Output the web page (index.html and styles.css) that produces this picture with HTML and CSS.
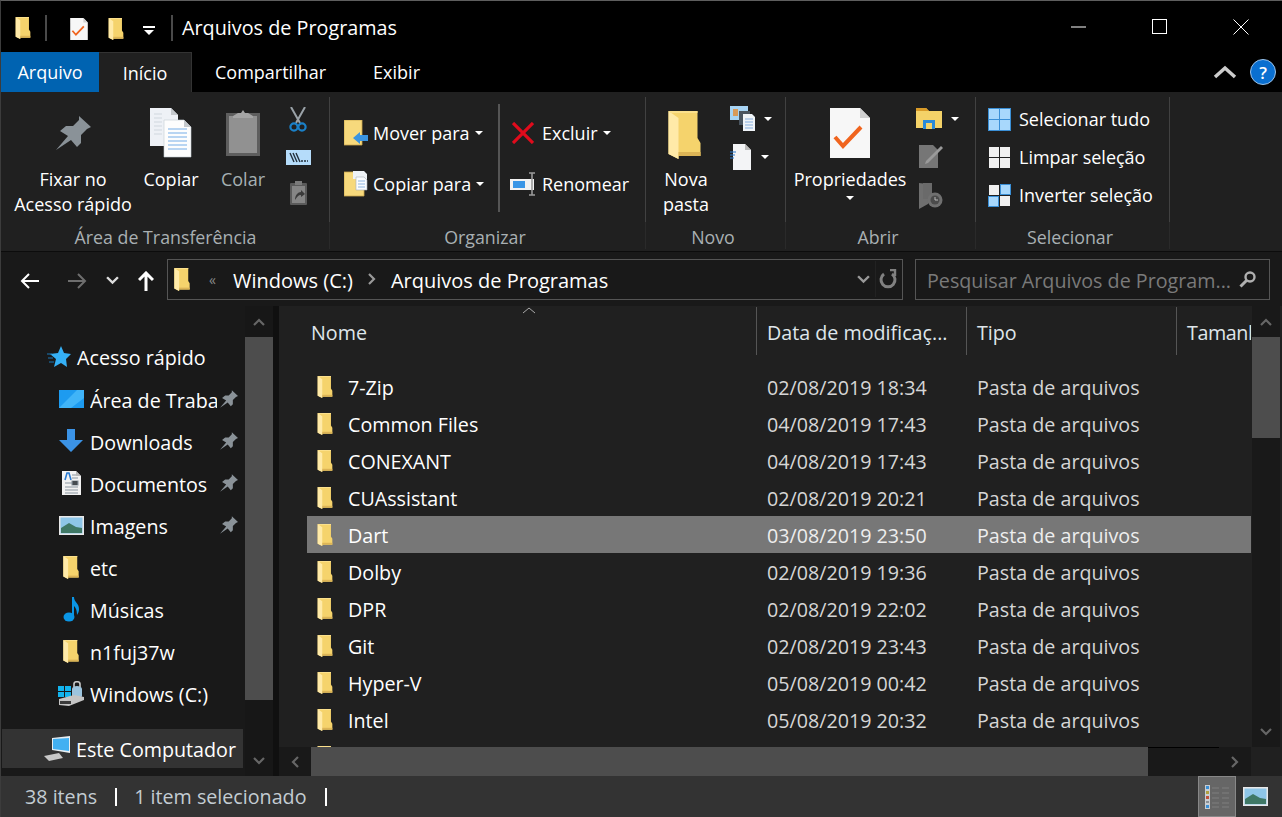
FILE: index.html
```html
<!DOCTYPE html>
<html lang="pt-BR">
<head>
<meta charset="utf-8">
<title>Arquivos de Programas</title>
<link rel="stylesheet" href="styles.css">
</head>
<body>
<svg class="defs" width="0" height="0" aria-hidden="true">
  <symbol id="folder" viewBox="0 0 32 48"><path d="M0 0H29V27L32 32V45H10V48L0 43Z" fill="#f5d36c"/><path d="M0 0L10 7V48L0 43Z" fill="#ffeaa8"/><path d="M10 41H32V45H10Z" fill="#dcb456"/><path d="M0 0H29V2H3Z" fill="#fbe08c"/></symbol>
  <symbol id="pin" viewBox="0 0 35 34"><path d="M0 34L12 20L4 15L10 10H17L23 4V0L35 11L31 13L25 19V27L21 31L15 24Z" fill="#8a9298"/></symbol>
  <symbol id="checkdoc" viewBox="0 0 40 50"><path d="M0 0H30L40 10V50H0Z" fill="#f7f7f7"/><path d="M30 0L40 10H30Z" fill="#cfcfcf"/><path d="M5 29L13 38L31 19" fill="none" stroke="#f0641e" stroke-width="4"/></symbol>
  <symbol id="copy" viewBox="0 0 42 50"><path d="M0 0H21L28 7V38H0Z" fill="#eef1f6"/><path d="M21 0L28 7H21Z" fill="#c4c8cc"/><path d="M14 12H34L41 19V49H14Z" fill="#fdfdfd" stroke="#c4ccd4" stroke-width=".6"/><path d="M34 12L41 19H34Z" fill="#c4c8cc"/><path d="M18 21H37M18 25H37M18 29H37M18 33H37M18 37H37M18 41H37" stroke="#b9d5f2" stroke-width="2"/><path d="M4 6H12M4 10H12M4 14H12M4 18H12M4 22H12M4 26H12" stroke="#dfe4ea" stroke-width="2"/></symbol>
  <symbol id="clip" viewBox="0 0 34 46"><rect y="3" width="34" height="43" fill="#5e5e5e"/><rect x="3" y="6" width="28" height="37" fill="#919191"/><path d="M7 6L12 3H15L17 0L19 3H22L27 6V8H7Z" fill="#a5a5a5"/></symbol>
  <symbol id="scissors" viewBox="0 0 18 25"><path d="M2 0L11 16M16 0L7 16" stroke="#9aa2a8" stroke-width="2" fill="none"/><circle cx="5" cy="20" r="3.6" fill="none" stroke="#1a80c8" stroke-width="2.2"/><circle cx="13" cy="20" r="3.6" fill="none" stroke="#1a80c8" stroke-width="2.2"/></symbol>
  <symbol id="pathbox" viewBox="0 0 25 15"><rect width="25" height="15" fill="#b5dcfa"/><path d="M4 3L8 12M7 3L11 12M10 3L14 12" stroke="#23303c" stroke-width="1.4"/><path d="M15 11H22" stroke="#23303c" stroke-width="1.6" stroke-dasharray="2 1"/></symbol>
  <symbol id="pasteshort" viewBox="0 0 17 24"><rect y="2" width="17" height="22" rx="1" fill="#5a5a5a"/><rect x="2" y="5" width="13" height="17" fill="#858585"/><path d="M5 0H12V4H5Z" fill="#7a7a7a"/><path d="M5 19C5 14 8 11 11 11V9L15 13L11 16V14C8 14 7 16 5 19Z" fill="#3a3a3a"/></symbol>
  <symbol id="move" viewBox="0 0 24 26"><path d="M0 0H18V25H0Z" fill="#f7d97c" stroke="#c9a54b" stroke-width=".8"/><path d="M9 18L16 12V15H24V21H16V24Z" fill="#3a94e0"/></symbol>
  <symbol id="copyto" viewBox="0 0 24 26"><path d="M0 1H20V25H0Z" fill="#f7d97c" stroke="#c9a54b" stroke-width=".8"/><path d="M9 0H20L23 3V17H12V8H9Z" fill="#eef2f6"/><path d="M12 6H20L23 9V19H12Z" fill="#fafcff" stroke="#a8b0b8" stroke-width=".6"/><path d="M14 10H21M14 13H21M14 16H21" stroke="#8fb6e2" stroke-width="1.2"/></symbol>
  <symbol id="redx" viewBox="0 0 22 22"><path d="M1 1L21 21M21 1L1 21" stroke="#e00b1c" stroke-width="3.2"/></symbol>
  <symbol id="rename" viewBox="0 0 26 24"><rect y="7" width="24" height="11" fill="#f2f2f2"/><rect x="3" y="9" width="12" height="7" fill="#3a96e6"/><path d="M19 1H25M22 1V23M19 23H25" stroke="#9a9a9a" stroke-width="1.6" fill="none"/></symbol>
  <symbol id="newitem" viewBox="0 0 25 25"><rect width="18" height="14" fill="#a8d4f4"/><rect x="3" y="3" width="5" height="7" fill="#d89a5a"/><rect x="9" y="5" width="11" height="14" fill="#4a5560"/><path d="M13 8H22L25 11V25H13Z" fill="#f0f4f8"/><path d="M15 13H23M15 16H23M15 19H23M15 22H23" stroke="#86aede" stroke-width="1.2"/></symbol>
  <symbol id="easy" viewBox="0 0 21 26"><path d="M3 0H15L21 6V26H3Z" fill="#f3f4f6"/><path d="M15 0L21 6H15Z" fill="#bcbcbc"/><path d="M0 8H6M0 11H5M0 14H4" stroke="#2a7ad0" stroke-width="1.2"/></symbol>
  <symbol id="explorer" viewBox="0 0 26 21"><path d="M0 3V0H10L13 3H26V20H0Z" fill="#f4d268"/><path d="M0 0H10L13 3H0Z" fill="#d99b28"/><path d="M7 12H19V21H7Z" fill="#2a8ad8"/><rect x="10" y="15" width="6" height="6" fill="#f4d268"/></symbol>
  <symbol id="edit" viewBox="0 0 24 24"><path d="M0 1H14L19 6V24H0Z" fill="#767676"/><path d="M7 17L22 2L24 4L9 19L6 20Z" fill="#9a9a9a"/></symbol>
  <symbol id="history" viewBox="0 0 24 26"><path d="M0 0L9 1V21L0 26Z" fill="#6f6f6f"/><path d="M4 0H13V16H4Z" fill="#6a6a6a"/><circle cx="16" cy="17" r="7.5" fill="#707070"/><circle cx="16" cy="17" r="4.5" fill="#4b4b4b"/><path d="M16 14V17H19" stroke="#bbb" stroke-width="1" fill="none"/></symbol>
  <symbol id="grid-all" viewBox="0 0 23 23"><rect width="23" height="23" fill="#3a8fd6"/><path d="M1 1H11V11H1ZM12 1H22V11H12ZM1 12H11V22H1ZM12 12H22V22H12Z" fill="#a8d8fc"/></symbol>
  <symbol id="grid-none" viewBox="0 0 23 23"><path d="M1 1H11V11H1ZM12 1H22V11H12ZM1 12H11V22H1ZM12 12H22V22H12Z" fill="#f0f0f0"/></symbol>
  <symbol id="grid-inv" viewBox="0 0 23 23"><path d="M12 0H23V11H12ZM0 12H11V23H0Z" fill="#3a8fd6"/><path d="M13 1H22V10H13ZM1 13H10V22H1Z" fill="#a8d8fc"/><path d="M1 1H11V11H1ZM12 12H22V22H12Z" fill="#f0f0f0"/></symbol>
  <symbol id="star" viewBox="0 0 24 22"><path d="M14 0L17 7L24 8L19 13L20 21L14 17L7 21L9 13L3 8L11 7Z" fill="#35b0f5"/><path d="M0 8H5M1 12H6M2 16H7" stroke="#1a78b8" stroke-width="1"/></symbol>
  <symbol id="desktop" viewBox="0 0 25 18"><rect width="25" height="18" fill="#1d9bf0"/><path d="M0 18L18 0H25V8L12 18Z" fill="#40b4f8"/></symbol>
  <symbol id="down" viewBox="0 0 24 24"><path d="M8 0H16V11H24L12 23L0 11H8Z" fill="#3b93e6"/></symbol>
  <symbol id="docs" viewBox="0 0 19 24"><path d="M0 0H14L19 5V24H0Z" fill="#f2f2f2"/><path d="M14 0L19 5H14Z" fill="#b8b8b8"/><path d="M3 9L5 2H7L9 9" fill="none" stroke="#2a7ad0" stroke-width="1.6"/><path d="M10 4H14M10 7H16M3 12H16M10 10H16V14H10ZM3 16H16M3 19H16M3 22H16" stroke="#8a96a0" stroke-width="1.1"/></symbol>
  <symbol id="pics" viewBox="0 0 25 19"><rect width="25" height="19" fill="#e8e8e8"/><rect x="1.500" y="1.500" width="22" height="16" fill="#8ec6e8"/><path d="M2 12L10 7L17 11L23 12V17H2Z" fill="#3f7866"/></symbol>
  <symbol id="music" viewBox="0 0 16 25"><ellipse cx="6" cy="20" rx="5.500" ry="4.500" fill="#0a96e6"/><path d="M9 0H11C11 5 16 6 16 12C16 15 15 16 14 18C14 12 12 10 11 9V20H9Z" fill="#0a96e6"/></symbol>
  <symbol id="drive" viewBox="0 0 26 25"><path d="M0 5H6V10H0ZM7 5H13V10H7ZM0 11H6V16H0ZM7 11H13V16H7Z" fill="#12b4ee"/><path d="M14 8C14 4 24 4 24 8V15C24 18 14 18 14 15Z" fill="#9cc4de"/><path d="M16 6V3C16 0 22 0 22 3V6" stroke="#c8c8c8" stroke-width="1.6" fill="none"/><path d="M1 18L16 14L26 16V19L11 25L1 24Z" fill="#c4c4c4"/><path d="M2 20H13V23H2Z" fill="#3a3a3a"/></symbol>
  <symbol id="pc" viewBox="0 0 26 25"><path d="M8 2L26 0V17L8 14Z" fill="#e8eef2"/><path d="M9 3L25 2V15L9 13Z" fill="#42b0f2"/><path d="M0 20L15 17L19 22L5 25Z" fill="#c8c8c8"/></symbol>
  <symbol id="listview" viewBox="0 0 24 24"><rect width="5" height="24" fill="#c8cdd2"/><path d="M1 1H4V4H1Z" fill="#3a8fd6"/><path d="M1 6H4V9H1Z" fill="#b0a040"/><path d="M1 11H4V14H1Z" fill="#c0503a"/><path d="M1 16H4V18H1Z" fill="#8a8f94"/><path d="M1 20H4V23H1Z" fill="#3a8fd6"/><path d="M7 3H14M17 3H24M7 8H14M17 8H24M7 13H14M17 13H24M7 18H14M17 18H24M7 22H14M17 22H24" stroke="#7e7e7e" stroke-width="1"/></symbol>
  <symbol id="mag" viewBox="0 0 17 17"><circle cx="11" cy="6" r="4.500" fill="none" stroke="#b0b0b0" stroke-width="2.400"/><path d="M7.500 9.500L1.500 15.500" stroke="#b0b0b0" stroke-width="3"/></symbol>
  <symbol id="chev-up" viewBox="0 0 12 8"><path d="M1 7L6 2L11 7" fill="none" stroke="currentColor" stroke-width="2.200"/></symbol>
  <symbol id="chev-down" viewBox="0 0 12 8"><path d="M1 1L6 6L11 1" fill="none" stroke="currentColor" stroke-width="2.200"/></symbol>
  <symbol id="chev-left" viewBox="0 0 8 12"><path d="M7 1L2 6L7 11" fill="none" stroke="currentColor" stroke-width="2.200"/></symbol>
  <symbol id="chev-right" viewBox="0 0 8 12"><path d="M1 1L6 6L1 11" fill="none" stroke="currentColor" stroke-width="2.200"/></symbol>
  <symbol id="arrow" viewBox="0 0 20 16"><path d="M19 8H2M9 1L2 8L9 15" fill="none" stroke="currentColor" stroke-width="2"/></symbol>
</svg>

<div class="window">
  <header class="titlebar">
    <svg class="qa-folder" width="16" height="22"><use href="#folder"/></svg>
    <span class="qa-sep first"></span>
    <svg class="qa-doc" width="18" height="22"><use href="#checkdoc"/></svg>
    <svg class="qa-folder2" width="16" height="22"><use href="#folder"/></svg>
    <span class="qa-drop"></span>
    <span class="qa-sep second"></span>
    <h1 class="title">Arquivos de Programas</h1>
    <div class="win-btns">
      <svg width="16" height="16" viewBox="0 0 16 16"><path d="M0 8H15" stroke="#fff"/></svg>
      <svg width="16" height="16" viewBox="0 0 16 16"><rect x=".5" y=".5" width="14" height="14" fill="none" stroke="#fff"/></svg>
      <svg width="16" height="16" viewBox="0 0 16 16"><path d="M.5 .5L15.500 15.500M15.500 .5L.5 15.500" stroke="#fff"/></svg>
    </div>
  </header>

  <nav class="tabs">
    <span class="tab tab-file">Arquivo</span>
    <span class="tab tab-home">Início</span>
    <span class="tab tab-share">Compartilhar</span>
    <span class="tab tab-view">Exibir</span>
    <svg class="collapse" width="24" height="14" viewBox="0 0 24 14"><path d="M2 12L12 3L22 12" fill="none" stroke="#ccc" stroke-width="3.500"/></svg>
    <span class="help">?</span>
  </nav>

  <section class="ribbon">
    <div class="group g-clip">
      <div class="group-body">
        <button class="big b-pin"><span class="big-icon"><svg width="35" height="34"><use href="#pin"/></svg></span><span>Fixar no<br>Acesso rápido</span></button>
        <button class="big b-copy"><span class="big-icon"><svg width="42" height="50"><use href="#copy"/></svg></span><span>Copiar</span></button>
        <button class="big b-paste dim"><span class="big-icon"><svg width="34" height="46"><use href="#clip"/></svg></span><span>Colar</span></button>
        <div class="icon-col">
          <svg width="18" height="25"><use href="#scissors"/></svg>
          <svg width="25" height="15"><use href="#pathbox"/></svg>
          <svg width="17" height="24"><use href="#pasteshort"/></svg>
        </div>
      </div>
      <div class="group-label">Área de Transferência</div>
    </div>

    <div class="group g-org">
      <div class="group-body">
        <div class="org-col org-a">
          <div class="org-row"><svg width="24" height="26"><use href="#move"/></svg><span>Mover para</span><i class="caret"></i></div>
          <div class="org-row"><svg width="24" height="26"><use href="#copyto"/></svg><span>Copiar para</span><i class="caret"></i></div>
        </div>
        <span class="org-sep"></span>
        <div class="org-col org-b">
          <div class="org-row"><svg class="ic-x" width="22" height="22"><use href="#redx"/></svg><span>Excluir</span><i class="caret"></i></div>
          <div class="org-row"><svg class="ic-ren" width="26" height="24"><use href="#rename"/></svg><span>Renomear</span></div>
        </div>
      </div>
      <div class="group-label">Organizar</div>
    </div>

    <div class="group g-new">
      <div class="group-body">
        <button class="big b-new"><span class="big-icon"><svg width="33" height="48"><use href="#folder"/></svg></span><span>Nova<br>pasta</span></button>
        <div class="drop-col">
          <div class="drop-row"><svg width="25" height="25"><use href="#newitem"/></svg><i class="caret"></i></div>
          <div class="drop-row"><svg width="21" height="26"><use href="#easy"/></svg><i class="caret"></i></div>
        </div>
      </div>
      <div class="group-label">Novo</div>
    </div>

    <div class="group g-open">
      <div class="group-body">
        <button class="big b-prop"><span class="big-icon"><svg width="40" height="50"><use href="#checkdoc"/></svg></span><span>Propriedades</span><i class="caret caret-prop"></i></button>
        <div class="open-col">
          <div class="drop-row"><svg width="26" height="21"><use href="#explorer"/></svg><i class="caret"></i></div>
          <div class="drop-row ind"><svg width="24" height="24"><use href="#edit"/></svg></div>
          <div class="drop-row ind"><svg width="24" height="26"><use href="#history"/></svg></div>
        </div>
      </div>
      <div class="group-label">Abrir</div>
    </div>

    <div class="group g-sel">
      <div class="group-body sel-col">
        <div class="sel-row"><svg width="23" height="23"><use href="#grid-all"/></svg><span>Selecionar tudo</span></div>
        <div class="sel-row"><svg width="23" height="23"><use href="#grid-none"/></svg><span>Limpar seleção</span></div>
        <div class="sel-row"><svg width="23" height="23"><use href="#grid-inv"/></svg><span>Inverter seleção</span></div>
      </div>
      <div class="group-label">Selecionar</div>
    </div>
  </section>

  <div class="navbar">
    <svg class="nav-back" width="20" height="16"><use href="#arrow"/></svg>
    <svg class="nav-fwd" width="20" height="16"><use href="#arrow"/></svg>
    <svg class="nav-hist" width="13" height="9"><use href="#chev-down"/></svg>
    <svg class="nav-up" width="16" height="20" viewBox="0 0 16 20"><path d="M8 20V3M1 9L8 2L15 9" fill="none" stroke="#fff" stroke-width="3"/></svg>
    <div class="address">
      <svg class="addr-folder" width="16" height="23"><use href="#folder"/></svg>
      <span class="addr-more">«</span>
      <span class="crumb">Windows (C:)</span>
      <svg class="crumb-sep" width="8" height="12"><use href="#chev-right"/></svg>
      <span class="crumb">Arquivos de Programas</span>
      <svg class="addr-drop" width="13" height="9"><use href="#chev-down"/></svg>
      <span class="addr-refresh"><svg width="18" height="20" viewBox="0 0 18 20"><path d="M5 5A7 7 0 1 0 13 5" fill="none" stroke="#808080" stroke-width="3"/><path d="M11 1H16V7" fill="none" stroke="#808080" stroke-width="2.400"/></svg></span>
    </div>
    <div class="search">
      <span class="search-text">Pesquisar Arquivos de Program...</span>
      <svg width="17" height="17"><use href="#mag"/></svg>
    </div>
  </div>

  <main class="main">
    <aside class="sidebar">
      <div class="side-head"><svg width="24" height="22"><use href="#star"/></svg><span>Acesso rápido</span></div>
      <div class="side-item"><span class="side-icon"><svg width="25" height="18"><use href="#desktop"/></svg></span><span class="side-text">Área de Trabalho</span><svg class="side-pin" width="18" height="18"><use href="#pin"/></svg></div>
      <div class="side-item"><span class="side-icon"><svg width="24" height="24"><use href="#down"/></svg></span><span class="side-text">Downloads</span><svg class="side-pin" width="18" height="18"><use href="#pin"/></svg></div>
      <div class="side-item"><span class="side-icon"><svg width="19" height="24"><use href="#docs"/></svg></span><span class="side-text">Documentos</span><svg class="side-pin" width="18" height="18"><use href="#pin"/></svg></div>
      <div class="side-item"><span class="side-icon"><svg width="25" height="19"><use href="#pics"/></svg></span><span class="side-text">Imagens</span><svg class="side-pin" width="18" height="18"><use href="#pin"/></svg></div>
      <div class="side-item"><span class="side-icon"><svg width="16" height="23"><use href="#folder"/></svg></span><span class="side-text">etc</span></div>
      <div class="side-item"><span class="side-icon"><svg width="16" height="25"><use href="#music"/></svg></span><span class="side-text">Músicas</span></div>
      <div class="side-item"><span class="side-icon"><svg width="16" height="23"><use href="#folder"/></svg></span><span class="side-text">n1fuj37w</span></div>
      <div class="side-item"><span class="side-icon"><svg width="26" height="25"><use href="#drive"/></svg></span><span class="side-text">Windows (C:)</span></div>
      <div class="side-head side-pc"><svg width="26" height="25"><use href="#pc"/></svg><span>Este Computador</span></div>
    </aside>
    <div class="vscroll side-scroll">
      <span class="sb-btn"><svg width="12" height="8"><use href="#chev-up"/></svg></span>
      <span class="sb-thumb side-thumb"></span>
      <span class="sb-track"></span>
      <span class="sb-btn"><svg width="12" height="8"><use href="#chev-down"/></svg></span>
    </div>
    <span class="pane-gap"></span>
    <div class="pane">
      <div class="pane-top">
        <div class="list">
          <div class="list-head">
            <span class="sort"><svg width="14" height="7" viewBox="0 0 14 7"><path d="M1 6L7 1L13 6" fill="none" stroke="#aaa"/></svg></span>
            <div class="hcell h-name">Nome</div>
            <div class="hcell h-date">Data de modificaç...</div>
            <div class="hcell h-type">Tipo</div>
            <div class="hcell h-size">Tamanho</div>
          </div>
          <div class="rows">
            <div class="row"><span class="cell-name"><svg width="16" height="22"><use href="#folder"/></svg>7-Zip</span><span>02/08/2019 18:34</span><span>Pasta de arquivos</span></div>
            <div class="row"><span class="cell-name"><svg width="16" height="22"><use href="#folder"/></svg>Common Files</span><span>04/08/2019 17:43</span><span>Pasta de arquivos</span></div>
            <div class="row"><span class="cell-name"><svg width="16" height="22"><use href="#folder"/></svg>CONEXANT</span><span>04/08/2019 17:43</span><span>Pasta de arquivos</span></div>
            <div class="row"><span class="cell-name"><svg width="16" height="22"><use href="#folder"/></svg>CUAssistant</span><span>02/08/2019 20:21</span><span>Pasta de arquivos</span></div>
            <div class="row selected"><span class="cell-name"><svg width="16" height="22"><use href="#folder"/></svg>Dart</span><span>03/08/2019 23:50</span><span>Pasta de arquivos</span></div>
            <div class="row"><span class="cell-name"><svg width="16" height="22"><use href="#folder"/></svg>Dolby</span><span>02/08/2019 19:36</span><span>Pasta de arquivos</span></div>
            <div class="row"><span class="cell-name"><svg width="16" height="22"><use href="#folder"/></svg>DPR</span><span>02/08/2019 22:02</span><span>Pasta de arquivos</span></div>
            <div class="row"><span class="cell-name"><svg width="16" height="22"><use href="#folder"/></svg>Git</span><span>02/08/2019 23:43</span><span>Pasta de arquivos</span></div>
            <div class="row"><span class="cell-name"><svg width="16" height="22"><use href="#folder"/></svg>Hyper-V</span><span>05/08/2019 00:42</span><span>Pasta de arquivos</span></div>
            <div class="row"><span class="cell-name"><svg width="16" height="22"><use href="#folder"/></svg>Intel</span><span>05/08/2019 20:32</span><span>Pasta de arquivos</span></div>
            <div class="row"><span class="cell-name"><svg width="16" height="22"><use href="#folder"/></svg></span></div>
          </div>
        </div>
        <div class="vscroll list-scroll">
          <span class="sb-btn"><svg width="12" height="8"><use href="#chev-up"/></svg></span>
          <span class="sb-thumb list-thumb"></span>
          <span class="sb-track"></span>
          <span class="sb-btn"><svg width="12" height="8"><use href="#chev-down"/></svg></span>
        </div>
      </div>
      <div class="hscroll">
        <span class="hs-btn"><svg width="8" height="12"><use href="#chev-left"/></svg></span>
        <span class="hs-thumb"></span>
        <span class="hs-track"></span>
        <span class="hs-btn"><svg width="8" height="12"><use href="#chev-right"/></svg></span>
      </div>
    </div>
  </main>

  <footer class="status">
    <span class="st-a">38 itens</span><span class="st-bar"></span>
    <span class="st-b">1 item selecionado</span><span class="st-bar"></span>
    <span class="view-btn active"><svg width="24" height="24"><use href="#listview"/></svg></span>
    <span class="view-btn"><svg width="25" height="19"><use href="#pics"/></svg></span>
  </footer>
</div>
</body>
</html>
```

FILE: styles.css
```css
* { box-sizing: border-box; }
html, body { margin: 0; padding: 0; background: #000; }
body { font-family: "Open Sans", "Noto Sans", sans-serif; font-size: 19.7px; color: #fff; overflow: hidden; }
.defs { position: absolute; }
svg { display: block; flex: none; }
button { font: inherit; color: inherit; background: none; border: 0; padding: 0; }

.window { width: 1282px; height: 817px; display: flex; flex-direction: column; border-top: 1px solid #5e5e5e; border-left: 1px solid #3c3c3c; overflow: hidden; }

.titlebar { height: 51px; flex: none; background: #000; display: flex; align-items: center; padding-left: 14px; }
.qa-folder { margin-top: 3px; }
.qa-sep { width: 2px; height: 26px; background: #4a4a4a; margin-top: 3px; }
.qa-sep.first { margin-left: 14px; margin-right: 23px; }
.qa-sep.second { margin-left: 16px; margin-right: 9px; }
.qa-doc { margin-top: 5px; }
.qa-folder2 { margin-left: 20px; margin-top: 5px; }
.qa-drop { margin-left: 19px; margin-top: 7px; width: 12px; height: 8px; border-top: 2px solid #fff; }
.qa-drop::after { content: ""; display: block; margin: 2px auto 0; width: 0; height: 0; border: 5px solid transparent; border-top: 5px solid #fff; border-bottom: 0; }
.title { font-size: 19.8px; font-weight: 400; margin: 1px 0 0; }
.win-btns { margin-left: auto; display: flex; gap: 65px; padding-right: 33px; }

.tabs { height: 40px; flex: none; background: #000; display: flex; align-items: center; }
.tab { height: 40px; display: flex; align-items: center; justify-content: center; font-size: 18px; }
.tab-file { width: 98px; background: #0063b1; }
.tab-home { width: 93px; background: #202020; border-top: 1px solid #333; border-right: 1px solid #333; }
.tab-share { margin-left: 23px; }
.tab-view { margin-left: 47px; }
.collapse { margin-left: auto; }
.help { width: 26px; height: 26px; margin: 0 6px 0 13px; border-radius: 50%; background: #0a6fd0; border: 1px solid #9cc4ea; display: flex; align-items: center; justify-content: center; font-size: 17px; font-weight: 600; }

.ribbon { height: 160px; flex: none; background: #202020; display: flex; border-bottom: 1px solid #0c0c0c; }
.group { flex: none; display: flex; flex-direction: column; position: relative; font-size: 18px; }
.group::after { content: ""; position: absolute; right: 0; top: 5px; bottom: 2px; width: 1px; background: linear-gradient(#414141 0, #414141 125px, #2a2a2a 125px); }
.group-body { height: 130px; flex: none; display: flex; }
.group-label { text-align: center; line-height: 31px; font-size: 17.8px; color: #a9b0b3; padding-right: 6px; }
.g-clip .group-label { padding-right: 0; }
.g-clip { width: 329px; }
.g-org { width: 316px; }
.g-new { width: 140px; }
.g-open { width: 190px; }
.g-sel { width: 194px; }

.big { display: flex; flex-direction: column; align-items: center; line-height: 25px; text-align: center; white-space: nowrap; }
.big-icon { height: 75px; display: flex; align-items: center; justify-content: center; padding-top: 6px; }
.dim { color: #a6b0b3; }
.b-pin { width: 118px; margin-left: 13px; }
.b-copy { width: 60px; margin-left: 9px; }
.b-paste { width: 50px; margin-left: 17px; }
.icon-col { width: 26px; margin-left: 17px; display: flex; flex-direction: column; align-items: center; padding-top: 15px; }
.icon-col svg { margin-bottom: 12px; }
.icon-col svg:nth-child(2) { margin-top: 6px; margin-bottom: 16px; }

.org-col { display: flex; flex-direction: column; padding-top: 28px; gap: 25px; }
.org-a { padding-left: 14px; width: 168px; }
.org-b { padding-left: 12px; }
.org-row { display: flex; align-items: center; height: 26px; gap: 5px; white-space: nowrap; }
.org-sep { width: 2px; height: 108px; margin-top: 12px; background: #555; }
.ic-x { margin-right: 3px; }
.ic-ren { margin-left: -2px; margin-right: 1px; }
.caret { display: block; width: 0; height: 0; border: 4px solid transparent; border-top: 4px solid #fff; border-bottom: 0; flex: none; }
.caret-prop { margin-top: 4px; }

.b-new { width: 60px; margin-left: 10px; }
.b-new .big-icon { padding: 10px 4px 0 0; }
.drop-col { margin-left: 14px; padding-top: 14px; display: flex; flex-direction: column; gap: 13px; }
.drop-row { display: flex; align-items: center; gap: 9px; }
.drop-row .caret { margin-left: auto; }
.drop-col .drop-row { width: 39px; }

.b-prop { width: 120px; margin-left: 4px; }
.open-col { margin-left: 6px; padding-top: 16px; display: flex; flex-direction: column; gap: 15px; }
.open-col .drop-row:first-child { width: 43px; }
.ind { padding-left: 3px; }

.sel-col { flex-direction: column; padding: 8px 0 0 12px; }
.sel-row { height: 38px; display: flex; align-items: center; gap: 8px; white-space: nowrap; }

.navbar { height: 54px; flex: none; background: #191919; display: flex; align-items: center; }
.nav-back { margin: 3px 0 0 19px; color: #fff; }
.nav-fwd { margin: 3px 0 0 27px; color: #6e6e6e; transform: scaleX(-1); }
.nav-hist { margin: 3px 0 0 19px; color: #ddd; }
.nav-up { margin: 3px 0 0 19px; }
.address { width: 736px; height: 41px; margin-left: 13px; border: 1px solid #555; display: flex; align-items: center; }
.addr-folder { margin-left: 6px; }
.addr-more { margin-left: 19px; color: #888; font-size: 14px; width: 24px; }
.crumb { white-space: nowrap; font-size: 20px; padding-top: 2px; }
.crumb-sep { margin: 0 15px; color: #999; }
.addr-drop { margin-left: auto; color: #999; }
.addr-refresh { width: 26px; margin-left: 5px; margin-right: 1px; padding-left: 3px; height: 36px; display: flex; align-items: center; border-left: 1px solid #222; }
.search { width: 355px; height: 41px; margin-left: 12px; border: 1px solid #555; display: flex; align-items: center; padding: 0 13px 0 11px; justify-content: space-between; }
.search-text { color: #7a7a7a; white-space: nowrap; padding-top: 2px; }

.main { flex: 1; min-height: 0; display: flex; background: #191919; }
.sidebar { width: 244px; flex: none; background: #191919; padding-top: 30px; }
.side-head { height: 42px; display: flex; align-items: center; padding-left: 46px; gap: 6px; }
.side-item { height: 42px; display: flex; align-items: center; padding-left: 57px; }
.side-icon { width: 26px; display: flex; justify-content: center; flex: none; }
.side-text { width: 127px; margin-left: 6px; padding-top: 2px; overflow: hidden; white-space: nowrap; }
.side-pin { margin-left: 3px; }
.side-pc { height: 39px; margin: 15px 2px 0 1px; background: #333; padding-left: 42px; }
.side-pc span { padding-top: 2px; }
.vscroll { width: 28px; flex: none; display: flex; flex-direction: column; background: #171717; }
.sb-btn { height: 31px; flex: none; display: flex; align-items: center; justify-content: center; color: #666; }
.sb-thumb { flex: none; background: #4d4d4d; }
.side-thumb { height: 363px; }
.list-thumb { height: 101px; }
.sb-track { flex: 1; }
.pane-gap { width: 6px; flex: none; background: #101010; }
.pane { flex: 1; min-width: 0; display: flex; flex-direction: column; background: #202020; }
.pane-top { flex: 1; min-height: 0; display: flex; }
.list { width: 972px; flex: none; background: #202020; overflow: hidden; padding-top: 1px; }
.list-head { display: grid; grid-template-columns: 478px 210px 210px 74px; height: 48px; position: relative; overflow: hidden; color: #dfe6ea; }
.hcell { height: 48px; display: flex; align-items: center; padding: 2px 0 0 10px; white-space: nowrap; border-right: 1px solid #555; overflow: hidden; }
.h-name { padding-left: 32px; }
.h-size { border-right: 0; letter-spacing: -.4px; }
.sort { position: absolute; left: 243px; top: 0; }
.rows { padding: 13px 0 0 28px; }
.row { height: 37px; display: grid; grid-template-columns: 460px 210px 1fr; align-items: center; white-space: nowrap; }
.row > span { padding-top: 2px; }
.row span:nth-child(n+2) { color: #d6d6d6; }
.cell-name { display: flex; align-items: center; gap: 15px; padding-left: 10px; color: #fff; }
.cell-name svg { margin-top: -2px; }
.selected { background: #777; }
.selected span:nth-child(n+2) { color: #eee; }
.list-scroll { margin-left: 1px; background: #191919; }
.hscroll { height: 29px; flex: none; display: flex; background: #191919; margin-right: 31px; }
.hs-btn { width: 32px; display: flex; align-items: center; justify-content: center; flex: none; color: #666; }
.hs-thumb { width: 837px; flex: none; background: #4d4d4d; }
.hs-track { flex: 1; border-top: 1px solid #000; }

.status { height: 41px; flex: none; background: #333; display: flex; align-items: center; color: #c3ccd2; }
.st-a { margin-left: 24px; }
.st-b { margin-left: 17px; }
.st-bar { width: 2px; height: 18px; background: #fff; margin-left: 18px; }
.view-btn { width: 38px; height: 41px; display: flex; align-items: center; justify-content: center; }
.view-btn.active { margin-left: auto; background: #666; border: 1px solid #888; }
.view-btn:last-child { margin-left: 6px; margin-right: 14px; width: 26px; }
```
